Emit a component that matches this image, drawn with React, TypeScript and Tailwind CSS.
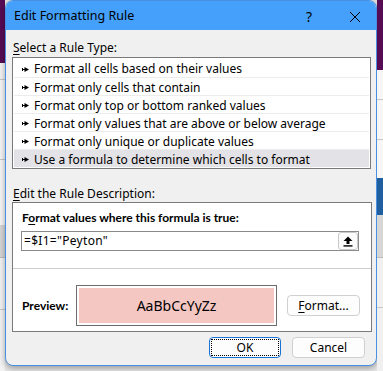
import React from "react";

const font = { fontFamily: '"Segoe UI", "Noto Sans", "Liberation Sans", sans-serif' };
const boldFont = { fontFamily: 'Lato, "Noto Sans", sans-serif' };

function Arrow() {
  return (
    <svg width="7" height="7" viewBox="0 0 7 7" className="shrink-0">
      <line x1="0.5" y1="2" x2="0.5" y2="5" stroke="#000" strokeWidth="1" />
      <line x1="0" y1="3.5" x2="3" y2="3.5" stroke="#000" strokeWidth="1" />
      <polygon points="2.5,1 7,3.5 2.5,6" fill="#000" />
    </svg>
  );
}

const rules = [
  "Format all cells based on their values",
  "Format only cells that contain",
  "Format only top or bottom ranked values",
  "Format only values that are above or below average",
  "Format only unique or duplicate values",
  "Use a formula to determine which cells to format",
];

export default function App() {
  return (
    <div
      className="w-[383px] h-[371px] flex bg-[#e6e6e6] overflow-hidden text-[12px] text-black"
      style={font}
    >
      {/* left background strip */}
      <div className="w-[5px] flex flex-col shrink-0">
        <div className="h-[63px] bg-[#570b55]" />
        <div className="h-[17px] bg-[#f3f3f3] border-b border-[#c8c8c8]" />
        <div className="h-[80px] bg-[#f6f6f6] border-b border-[#c8c8c8]" />
        <div className="h-[65px] bg-[#f6f6f6]" />
        <div className="h-[33px] bg-[#d6d6d6] border-b border-[#bdbdbd]" />
        <div className="h-[52px] bg-[#f3f3f3] border-b border-[#c8c8c8]" />
        <div className="flex-1 bg-[#f3f3f3]" />
      </div>

      {/* dialog */}
      <div className="w-[372px] h-[366px] shrink-0 flex flex-col bg-[#f0f0f0] border border-[#4a90e2] rounded-[8px] overflow-hidden shadow-[0_2px_6px_rgba(0,0,0,0.35)]">
        {/* title bar */}
        <div className="h-[29px] bg-[#44a0fb] flex items-center pl-[8px] shrink-0">
          <span className="text-[12.5px] leading-none mt-[2px]">Edit Formatting Rule</span>
          <span className="ml-auto mr-[37px] text-[14px] leading-none mt-[2px]">?</span>
          <svg width="12" height="12" viewBox="0 0 12 12" className="mr-[15px] mt-[2px]">
            <path d="M1 1 L11 11 M11 1 L1 11" stroke="#000" strokeWidth="1" />
          </svg>
        </div>

        {/* body */}
        <div className="flex flex-col pl-[6px] pt-[9px]">
          <div className="h-[16px] leading-[16px] pl-[1px] pt-[1px]">
            <span className="underline underline-offset-[2px]">S</span>elect a Rule Type:
          </div>
          <div className="mt-[2px] w-[359px] h-[112px] border border-[#7a7a7a] bg-white p-[1px] flex flex-col">
            {rules.map((r, i) => (
              <div
                key={r}
                className={
                  "h-[18px] flex items-center pl-[8px] pt-[2px] gap-[5px] " +
                  (i > 0 ? "border-t border-[#ececec] " : "") +
                  (i === 5 ? "bg-[#e3e2e6]" : "")
                }
              >
                <Arrow />
                <span className="leading-none whitespace-nowrap">{r}</span>
              </div>
            ))}
          </div>

          <div className="h-[16px] leading-[16px] pl-[1px] pt-[1px] mt-[16px]">
            <span className="underline underline-offset-[2px]">E</span>dit the Rule Description:
          </div>
          <div className="mt-[1px] w-[360px] h-[130px] border border-[#7a7a7a] bg-white flex flex-col">
            <div className="h-[66px] flex flex-col pl-[8px] border-b border-[#cfcfcf] shrink-0">
              <div className="h-[16px] leading-[16px] mt-[7px] font-bold pl-[1px] text-[12px]" style={boldFont}>
                F<span className="underline underline-offset-[2px]">o</span>rmat values where this formula is true:
              </div>
              <div className="mt-[5px] w-[338px] h-[20px] border border-[#8a8a8a] flex items-center pl-[2px]">
                <span className="leading-none tracking-[0.3px]">=$I1="Peyton"</span>
                <div className="ml-auto w-[20px] h-[18px] border border-[#c9c9c9] rounded-[3px] bg-[#fbfbfb] flex items-center justify-center">
                  <svg width="10" height="11" viewBox="0 0 10 11">
                    <polygon points="5,0.5 9.5,5 6.5,5 6.5,8 3.5,8 3.5,5 0.5,5" fill="#000" />
                    <rect x="0.5" y="9.2" width="9" height="1.4" fill="#000" />
                  </svg>
                </div>
              </div>
            </div>
            <div className="flex items-center pl-[9px] mt-[16px]">
              <span className="font-bold w-[54px] text-[12px]" style={boldFont}>Preview:</span>
              <div className="w-[201px] h-[41px] border border-[#6d6d6d] p-[2px] bg-white">
                <div className="w-full h-full bg-[#f4c7c3] flex items-center justify-center text-[14px]">
                  AaBbCcYyZz
                </div>
              </div>
              <div className="ml-[10px] w-[73px] h-[21px] border border-[#d0d0d0] rounded-[4px] bg-[#fdfdfd] flex items-center justify-center">
                <span className="leading-none">
                  <span className="underline underline-offset-[2px]">F</span>ormat...
                </span>
              </div>
            </div>
          </div>

          <div className="flex mt-[5px] pl-[197px] gap-[11px]">
            <div className="w-[72px] h-[21px] border border-[#1a73d4] rounded-[4px] bg-[#fdfdfd] p-[1px]">
              <div className="w-full h-full border border-dotted border-black flex items-center justify-center leading-none">
                OK
              </div>
            </div>
            <div className="w-[73px] h-[21px] border border-[#d0d0d0] rounded-[4px] bg-[#fdfdfd] flex items-center justify-center leading-none">
              Cancel
            </div>
          </div>
        </div>
      </div>

      {/* right background strip */}
      <div className="w-[6px] flex flex-col shrink-0">
        <div className="h-[70px] bg-[#570b55]" />
        <div className="h-[30px] bg-[#f6f6f6] border-b border-[#c8c8c8]" />
        <div className="h-[40px] bg-[#f6f6f6] border-b border-[#c8c8c8]" />
        <div className="h-[38px] bg-[#f6f6f6]" />
        <div className="h-[37px] bg-[#1f5f9f]" />
        <div className="h-[43px] bg-[#d6d6d6] border-b border-[#bdbdbd]" />
        <div className="h-[50px] bg-[#f0f0f0] border-b border-[#c8c8c8]" />
        <div className="flex-1 bg-[#f0f0f0]" />
      </div>
    </div>
  );
}
